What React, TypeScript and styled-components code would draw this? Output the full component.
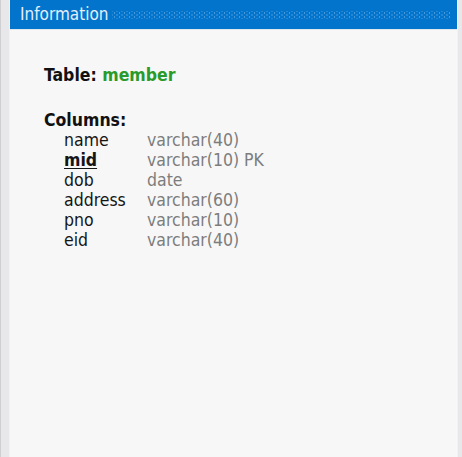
import React from "react";
import styled, { createGlobalStyle } from "styled-components";

const Global = createGlobalStyle`
  html, body { margin: 0; padding: 0; background: #e8e8ea; }
  #root { height: 457px; }
`;

const Frame = styled.div`
  display: flex;
  height: 457px;
  width: 462px;
  box-sizing: border-box;
  border-left: 1px solid #cfcfd2;
  padding: 0 4px 0 8px;
  background: #e8e8ea;
`;

const Panel = styled.section`
  flex: 1;
  display: flex;
  flex-direction: column;
  background: #f7f7f7;
  border-left: 1px solid #f2f2f3;
  border-right: 1px solid #f2f2f3;
`;

const Header = styled.header`
  height: 29px;
  background: #0274cc;
  border-bottom: 1px solid #dfe6ee;
  display: flex;
  align-items: center;
  gap: 3px;
  padding: 0 7px 0 10px;
`;

const Title = styled.span`
  color: #e4eef9;
  font-family: "DejaVu Sans Condensed", "DejaVu Sans", sans-serif;
  font-size: 17px;
  line-height: 1;
`;

const Dots = styled.div`
  flex: 1;
  height: 8px;
  background-image: radial-gradient(circle, rgba(150, 195, 240, 0.45) 0.8px, transparent 1.1px),
    radial-gradient(circle, rgba(150, 195, 240, 0.45) 0.8px, transparent 1.1px);
  background-size: 5px 4px;
  background-position: 0 0, 2.5px 2px;
`;

const Body = styled.div`
  padding: 35px 0 0 34px;
  font-family: "DejaVu Sans Condensed", "DejaVu Sans", sans-serif;
  font-size: 17.5px;
  color: #111;
`;

const TableLine = styled.div`
  font-weight: bold;
  line-height: 20px;
  margin-bottom: 25px;
`;

const TableName = styled.span`
  color: #2a9a2a;
`;

const ColumnsLabel = styled.div`
  font-weight: bold;
  line-height: 20px;
`;

const ColumnGrid = styled.div`
  display: grid;
  grid-template-columns: 83px auto;
  padding-left: 20px;
  line-height: 20px;
`;

const ColName = styled.span<{ $pk?: boolean }>`
  color: #151515;
  font-weight: ${(p) => (p.$pk ? "bold" : "normal")};
  text-decoration: ${(p) => (p.$pk ? "underline" : "none")};
  text-underline-offset: 2px;
`;

const ColType = styled.span`
  color: #7d7d7d;
`;

const columns = [
  { name: "name", type: "varchar(40)" },
  { name: "mid", type: "varchar(10) PK", pk: true },
  { name: "dob", type: "date" },
  { name: "address", type: "varchar(60)" },
  { name: "pno", type: "varchar(10)" },
  { name: "eid", type: "varchar(40)" },
];

export default function App() {
  return (
    <>
      <Global />
      <Frame>
        <Panel>
          <Header>
            <Title>Information</Title>
            <Dots />
          </Header>
          <Body>
            <TableLine>
              Table: <TableName>member</TableName>
            </TableLine>
            <ColumnsLabel>Columns:</ColumnsLabel>
            <ColumnGrid>
              {columns.map((c) => (
                <React.Fragment key={c.name}>
                  <ColName $pk={c.pk}>{c.name}</ColName>
                  <ColType>{c.type}</ColType>
                </React.Fragment>
              ))}
            </ColumnGrid>
          </Body>
        </Panel>
      </Frame>
    </>
  );
}
